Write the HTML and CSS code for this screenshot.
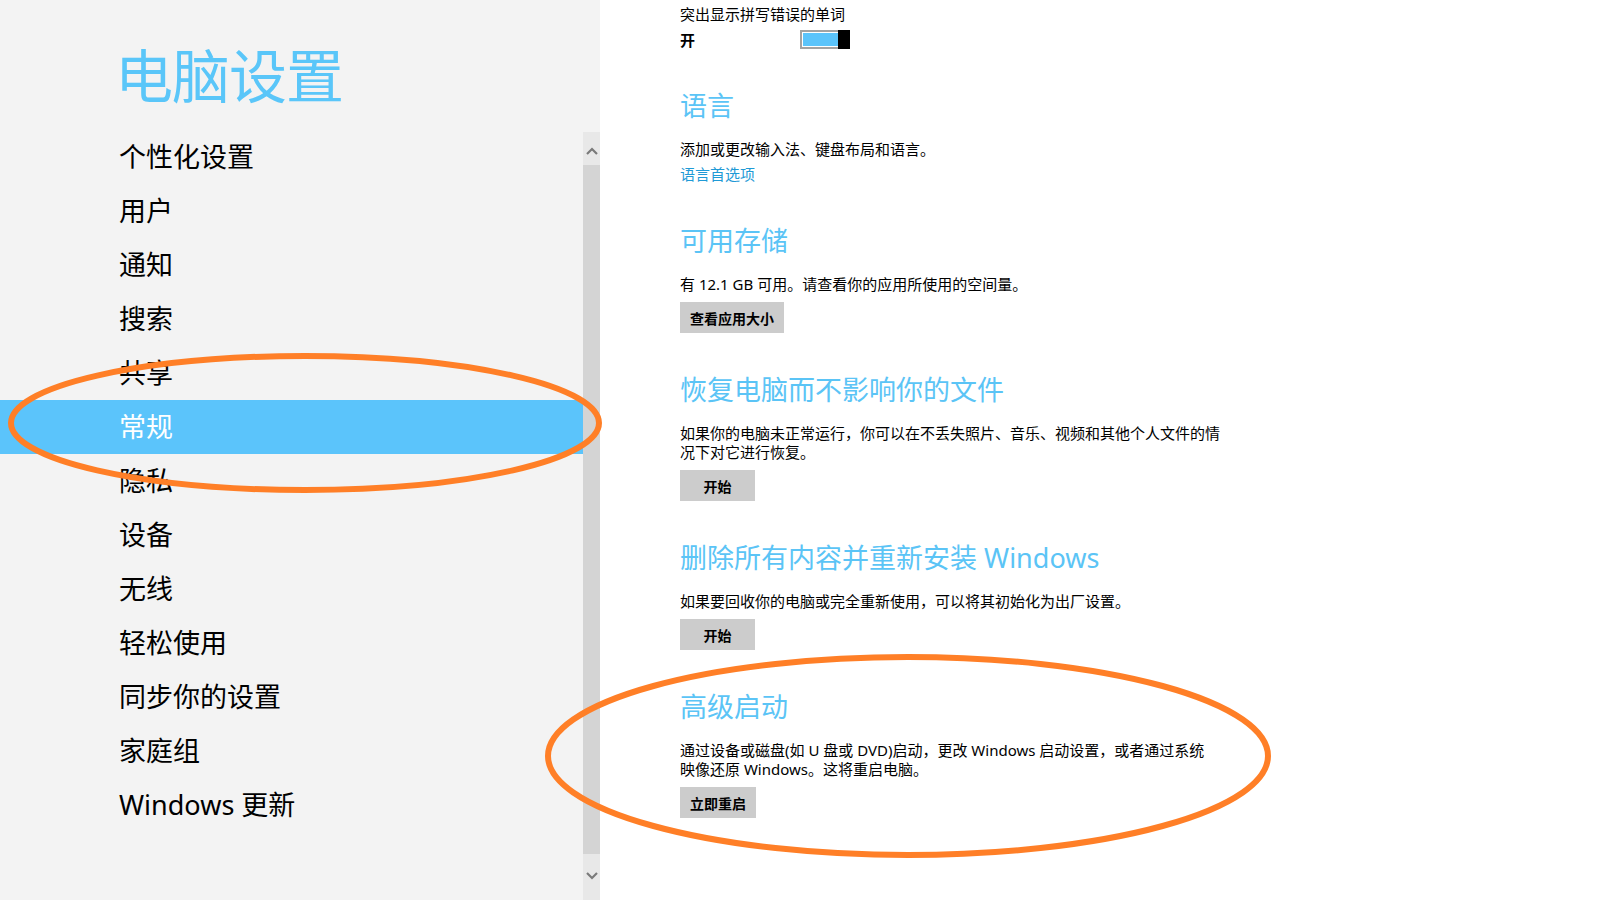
FILE: index.html
```html
<!DOCTYPE html>
<html lang="zh-CN">
<head>
    <meta charset="UTF-8">
    <title>电脑设置 - 常规</title>
    <link rel="stylesheet" href="styles.css">
</head>
<body>
    <div class="sidebar">
        <h1 class="title">电脑设置</h1>
        <div class="nav-area">
            <ul class="nav-list">
                <li>个性化设置</li>
                <li>用户</li>
                <li>通知</li>
                <li>搜索</li>
                <li>共享</li>
                <li class="active">常规</li>
                <li>隐私</li>
                <li>设备</li>
                <li>无线</li>
                <li>轻松使用</li>
                <li>同步你的设置</li>
                <li>家庭组</li>
                <li>Windows 更新</li>
            </ul>
            <div class="scrollbar">
                <div class="scroll-btn scroll-up">
                    <svg width="12" height="8" viewBox="0 0 12 8"><polyline points="1,7 6,2 11,7" fill="none" stroke="#7a7a7a" stroke-width="2.2"/></svg>
                </div>
                <div class="scroll-thumb"></div>
                <div class="scroll-btn scroll-down">
                    <svg width="12" height="8" viewBox="0 0 12 8"><polyline points="1,1 6,6 11,1" fill="none" stroke="#7a7a7a" stroke-width="2.2"/></svg>
                </div>
            </div>
        </div>
    </div>

    <div class="content">
        <div class="field-label">突出显示拼写错误的单词</div>
        <div class="toggle-row">
            <span class="toggle-state">开</span>
            <div class="toggle">
                <div class="toggle-track"><div class="toggle-fill"></div></div>
                <div class="toggle-thumb"></div>
            </div>
        </div>

        <div class="section">
            <h2>语言</h2>
            <p>添加或更改输入法、键盘布局和语言。</p>
            <a class="link" href="#">语言首选项</a>
        </div>

        <div class="section">
            <h2>可用存储</h2>
            <p>有 12.1 GB 可用。请查看你的应用所使用的空间量。</p>
            <button>查看应用大小</button>
        </div>

        <div class="section">
            <h2>恢复电脑而不影响你的文件</h2>
            <p>如果你的电脑未正常运行，你可以在不丢失照片、音乐、视频和其他个人文件的情况下对它进行恢复。</p>
            <button>开始</button>
        </div>

        <div class="section">
            <h2>删除所有内容并重新安装 Windows</h2>
            <p>如果要回收你的电脑或完全重新使用，可以将其初始化为出厂设置。</p>
            <button>开始</button>
        </div>

        <div class="section">
            <h2>高级启动</h2>
            <p>通过设备或磁盘(如 U 盘或 DVD)启动，更改 Windows 启动设置，或者通过系统<br>映像还原 Windows。这将重启电脑。</p>
            <button>立即重启</button>
        </div>
    </div>

    <!-- hand-drawn annotation marks -->
    <svg class="marks" width="1600" height="900" viewBox="0 0 1600 900">
        <ellipse cx="305" cy="423" rx="294" ry="67" fill="none" stroke="#ff7f27" stroke-width="6"/>
        <ellipse cx="908" cy="756" rx="360" ry="99" fill="none" stroke="#ff7f27" stroke-width="6"/>
    </svg>
</body>
</html>
```

FILE: styles.css
```css
body { margin: 0; height: 900px; overflow: hidden; display: flex; font-family: "Noto Sans", "Noto Sans CJK SC", sans-serif; color: #000; background-color: #fff; position: relative; }

/* left column */
.sidebar { width: 600px; background-color: #f3f3f3; display: flex; flex-direction: column; }
.title { margin: 0; height: 130px; box-sizing: border-box; padding: 47px 0 0 115px; font-size: 58px; line-height: 58px; font-weight: 400; color: #5ac6f9; letter-spacing: -1px; }
.nav-area { flex: 1; display: flex; }
.nav-list { flex: 1; list-style: none; margin: 0; padding: 0; }
.nav-list li { height: 54px; line-height: 54px; padding-left: 119px; font-size: 27px; }
.nav-list li.active { background-color: #5bc4fb; color: #fff; }
.scrollbar { width: 17px; display: flex; flex-direction: column; background-color: #e8e8e8; margin-top: 2px; }
.scroll-btn { display: flex; align-items: center; justify-content: center; }
.scroll-up { height: 33px; padding-top: 4px; box-sizing: border-box; }
.scroll-down { height: 46px; padding-bottom: 2px; box-sizing: border-box; }
.scroll-thumb { flex: 1; background-color: #d4d4d4; }

/* right column */
.content { flex: 1; padding: 4px 0 0 80px; }
.field-label { font-size: 15px; line-height: 20px; }
.toggle-row { display: flex; align-items: center; margin-top: 6px; height: 19px; }
.toggle-state { width: 120px; font-size: 15px; font-weight: 700; }
.toggle { position: relative; width: 50px; height: 19px; }
.toggle-track { height: 100%; box-sizing: border-box; border: 2px solid #a3a3a3; padding: 1px; background-color: #fff; }
.toggle-fill { height: 100%; background-color: #5bc4fb; }
.toggle-thumb { position: absolute; right: 0; top: 0; width: 12px; height: 19px; background-color: #000; }

.section { margin-top: 39px; width: 550px; }
.section h2 { margin: 0; font-size: 27px; line-height: 36px; font-weight: 400; color: #5bc4f6; }
.section p { margin: 16px 0 0; font-size: 15px; line-height: 19px; }
.section p + button { margin-top: 8px; }
.link { display: block; margin-top: 6px; font-size: 15px; line-height: 19px; color: #1f9ad6; text-decoration: none; }
button { display: block; height: 31px; min-width: 75px; padding: 0 10px; border: none; background-color: #cccccc; font-family: inherit; font-size: 14px; font-weight: 700; color: #000; }

.marks { position: absolute; left: 0; top: 0; pointer-events: none; }
```
